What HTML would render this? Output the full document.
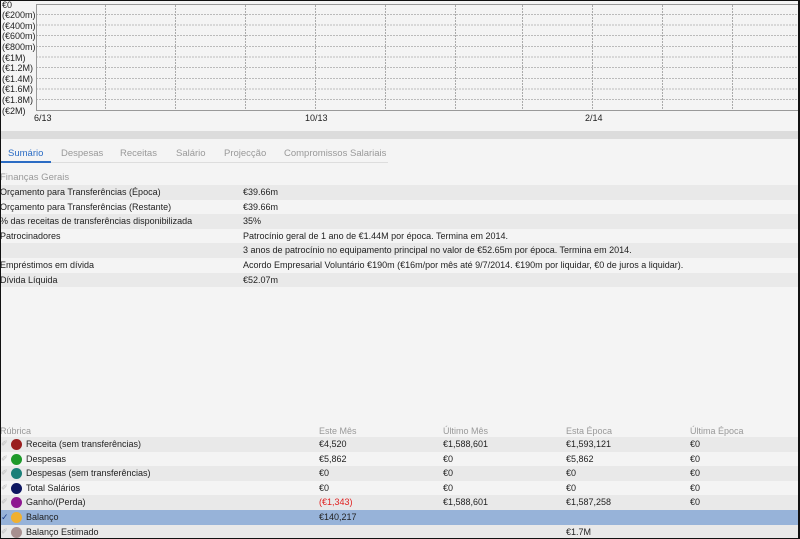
<!DOCTYPE html>
<html><head><meta charset="utf-8"><style>
*{margin:0;padding:0;box-sizing:border-box}
body{width:800px;height:539px;overflow:hidden;background:#f4f4f4;font-family:"Liberation Sans",sans-serif;font-size:9px;color:#222;position:relative}
.frame{position:absolute;left:0;top:0;width:800px;height:539px;border:1px solid #111;border-right:2px solid #111;pointer-events:none}
.ab{position:absolute;white-space:nowrap}
.ylab{position:absolute;left:2px;font-size:9px;color:#222}
.bar{position:absolute;left:0;top:131px;width:800px;height:8px;background:#dcdcdc}
.tab{position:absolute;top:148px;font-size:9.5px;color:#999}
.row{position:absolute;left:0;width:800px;height:14.6px;line-height:14.6px}
.sh{background:#e9e9e9}
.dot{position:absolute;left:11px;top:2px;width:11px;height:11px;border-radius:50%}
.chk{position:absolute;left:1px;color:#bbb;font-size:8px}
</style></head><body>
<svg class="ab" style="left:0;top:0" width="800" height="130">
<g stroke="#bbb" stroke-width="1" stroke-dasharray="2,1">
<line x1="36" y1="14.5" x2="799" y2="14.5"/><line x1="36" y1="25" x2="799" y2="25"/><line x1="36" y1="35.5" x2="799" y2="35.5"/><line x1="36" y1="46.5" x2="799" y2="46.5"/><line x1="36" y1="57" x2="799" y2="57"/><line x1="36" y1="67.5" x2="799" y2="67.5"/><line x1="36" y1="78.5" x2="799" y2="78.5"/><line x1="36" y1="89" x2="799" y2="89"/><line x1="36" y1="99.5" x2="799" y2="99.5"/>
</g>
<g stroke="#aaa" stroke-width="1" stroke-dasharray="2,1">
<line x1="105.5" y1="5" x2="105.5" y2="110"/><line x1="175.5" y1="5" x2="175.5" y2="110"/><line x1="245.5" y1="5" x2="245.5" y2="110"/><line x1="315.5" y1="5" x2="315.5" y2="110"/><line x1="385.5" y1="5" x2="385.5" y2="110"/><line x1="455.5" y1="5" x2="455.5" y2="110"/><line x1="522.5" y1="5" x2="522.5" y2="110"/><line x1="592.5" y1="5" x2="592.5" y2="110"/><line x1="662.5" y1="5" x2="662.5" y2="110"/><line x1="732.5" y1="5" x2="732.5" y2="110"/>
</g>
<g stroke="#999" stroke-width="1" fill="none"><line x1="36" y1="4.5" x2="799" y2="4.5"/><line x1="36" y1="110.5" x2="799" y2="110.5"/><line x1="36.5" y1="4" x2="36.5" y2="111"/></g>
</svg>
<div class="ylab" style="top:0">€0</div>
<div class="ylab" style="top:10px">(€200m)</div>
<div class="ylab" style="top:21px">(€400m)</div>
<div class="ylab" style="top:31px">(€600m)</div>
<div class="ylab" style="top:42px">(€800m)</div>
<div class="ylab" style="top:53px">(€1M)</div>
<div class="ylab" style="top:63px">(€1.2M)</div>
<div class="ylab" style="top:74px">(€1.4M)</div>
<div class="ylab" style="top:84px">(€1.6M)</div>
<div class="ylab" style="top:95px">(€1.8M)</div>
<div class="ylab" style="top:106px">(€2M)</div>
<div class="ab" style="left:34px;top:113px">6/13</div>
<div class="ab" style="left:305px;top:113px">10/13</div>
<div class="ab" style="left:585px;top:113px">2/14</div>
<div class="bar"></div>
<div class="tab" style="left:8px;color:#2b6cc4">Sumário</div>
<div class="tab" style="left:61px">Despesas</div>
<div class="tab" style="left:120px">Receitas</div>
<div class="tab" style="left:176px">Salário</div>
<div class="tab" style="left:224px">Projecção</div>
<div class="tab" style="left:284px">Compromissos Salariais</div>
<div class="ab" style="left:0;top:162px;width:388px;height:1px;background:#ddd"></div>
<div class="ab" style="left:0;top:161px;width:51px;height:2px;background:#2b6cc4"></div>
<div class="ab" style="left:0;top:172px;color:#999;font-size:9.5px">Finanças Gerais</div>
<div class="row sh" style="top:185px"><span class="ab" style="left:0">Orçamento para Transferências (Época)</span><span class="ab" style="left:243px">€39.66m</span></div>
<div class="row" style="top:199.6px"><span class="ab" style="left:0">Orçamento para Transferências (Restante)</span><span class="ab" style="left:243px">€39.66m</span></div>
<div class="row sh" style="top:214.2px"><span class="ab" style="left:0">% das receitas de transferências disponibilizada</span><span class="ab" style="left:243px">35%</span></div>
<div class="row" style="top:228.8px"><span class="ab" style="left:0">Patrocinadores</span><span class="ab" style="left:243px">Patrocínio geral de 1 ano de €1.44M por época. Termina em 2014.</span></div>
<div class="row sh" style="top:243.4px"><span class="ab" style="left:243px">3 anos de patrocínio no equipamento principal no valor de €52.65m por época. Termina em 2014.</span></div>
<div class="row" style="top:258px"><span class="ab" style="left:0">Empréstimos em dívida</span><span class="ab" style="left:243px">Acordo Empresarial Voluntário €190m (€16m/por mês até 9/7/2014. €190m por liquidar, €0 de juros a liquidar).</span></div>
<div class="row sh" style="top:272.6px"><span class="ab" style="left:0">Dívida Líquida</span><span class="ab" style="left:243px">€52.07m</span></div>

<div class="row" style="top:424px;color:#999"><span class="ab" style="left:0">Rúbrica</span><span class="ab" style="left:319px">Este Mês</span><span class="ab" style="left:443px">Último Mês</span><span class="ab" style="left:566px">Esta Época</span><span class="ab" style="left:690px">Última Época</span></div>
<div class="row sh" style="top:437px"><span class="chk">✐</span><span class="dot" style="background:#9a1e1e"></span><span class="ab" style="left:26px">Receita (sem transferências)</span><span class="ab" style="left:319px">€4,520</span><span class="ab" style="left:443px">€1,588,601</span><span class="ab" style="left:566px">€1,593,121</span><span class="ab" style="left:690px">€0</span></div>
<div class="row" style="top:451.6px"><span class="chk">✐</span><span class="dot" style="background:#1e9a2a"></span><span class="ab" style="left:26px">Despesas</span><span class="ab" style="left:319px">€5,862</span><span class="ab" style="left:443px">€0</span><span class="ab" style="left:566px">€5,862</span><span class="ab" style="left:690px">€0</span></div>
<div class="row sh" style="top:466.2px"><span class="chk">✐</span><span class="dot" style="background:#1a7f78"></span><span class="ab" style="left:26px">Despesas (sem transferências)</span><span class="ab" style="left:319px">€0</span><span class="ab" style="left:443px">€0</span><span class="ab" style="left:566px">€0</span><span class="ab" style="left:690px">€0</span></div>
<div class="row" style="top:480.8px"><span class="chk">✐</span><span class="dot" style="background:#0d1660"></span><span class="ab" style="left:26px">Total Salários</span><span class="ab" style="left:319px">€0</span><span class="ab" style="left:443px">€0</span><span class="ab" style="left:566px">€0</span><span class="ab" style="left:690px">€0</span></div>
<div class="row sh" style="top:495.4px"><span class="chk">✐</span><span class="dot" style="background:#8e1890"></span><span class="ab" style="left:26px">Ganho/(Perda)</span><span class="ab" style="left:319px;color:#e02020">(€1,343)</span><span class="ab" style="left:443px">€1,588,601</span><span class="ab" style="left:566px">€1,587,258</span><span class="ab" style="left:690px">€0</span></div>
<div class="row" style="top:510px;background:#97b3d9"><span class="chk" style="color:#1d3f8a;font-size:9px">✓</span><span class="dot" style="background:#f0b030"></span><span class="ab" style="left:26px">Balanço</span><span class="ab" style="left:319px">€140,217</span></div>
<div class="row sh" style="top:524.6px"><span class="chk">✐</span><span class="dot" style="background:#a89090"></span><span class="ab" style="left:26px">Balanço Estimado</span><span class="ab" style="left:566px">€1.7M</span></div>
<div class="frame"></div>
</body></html>
